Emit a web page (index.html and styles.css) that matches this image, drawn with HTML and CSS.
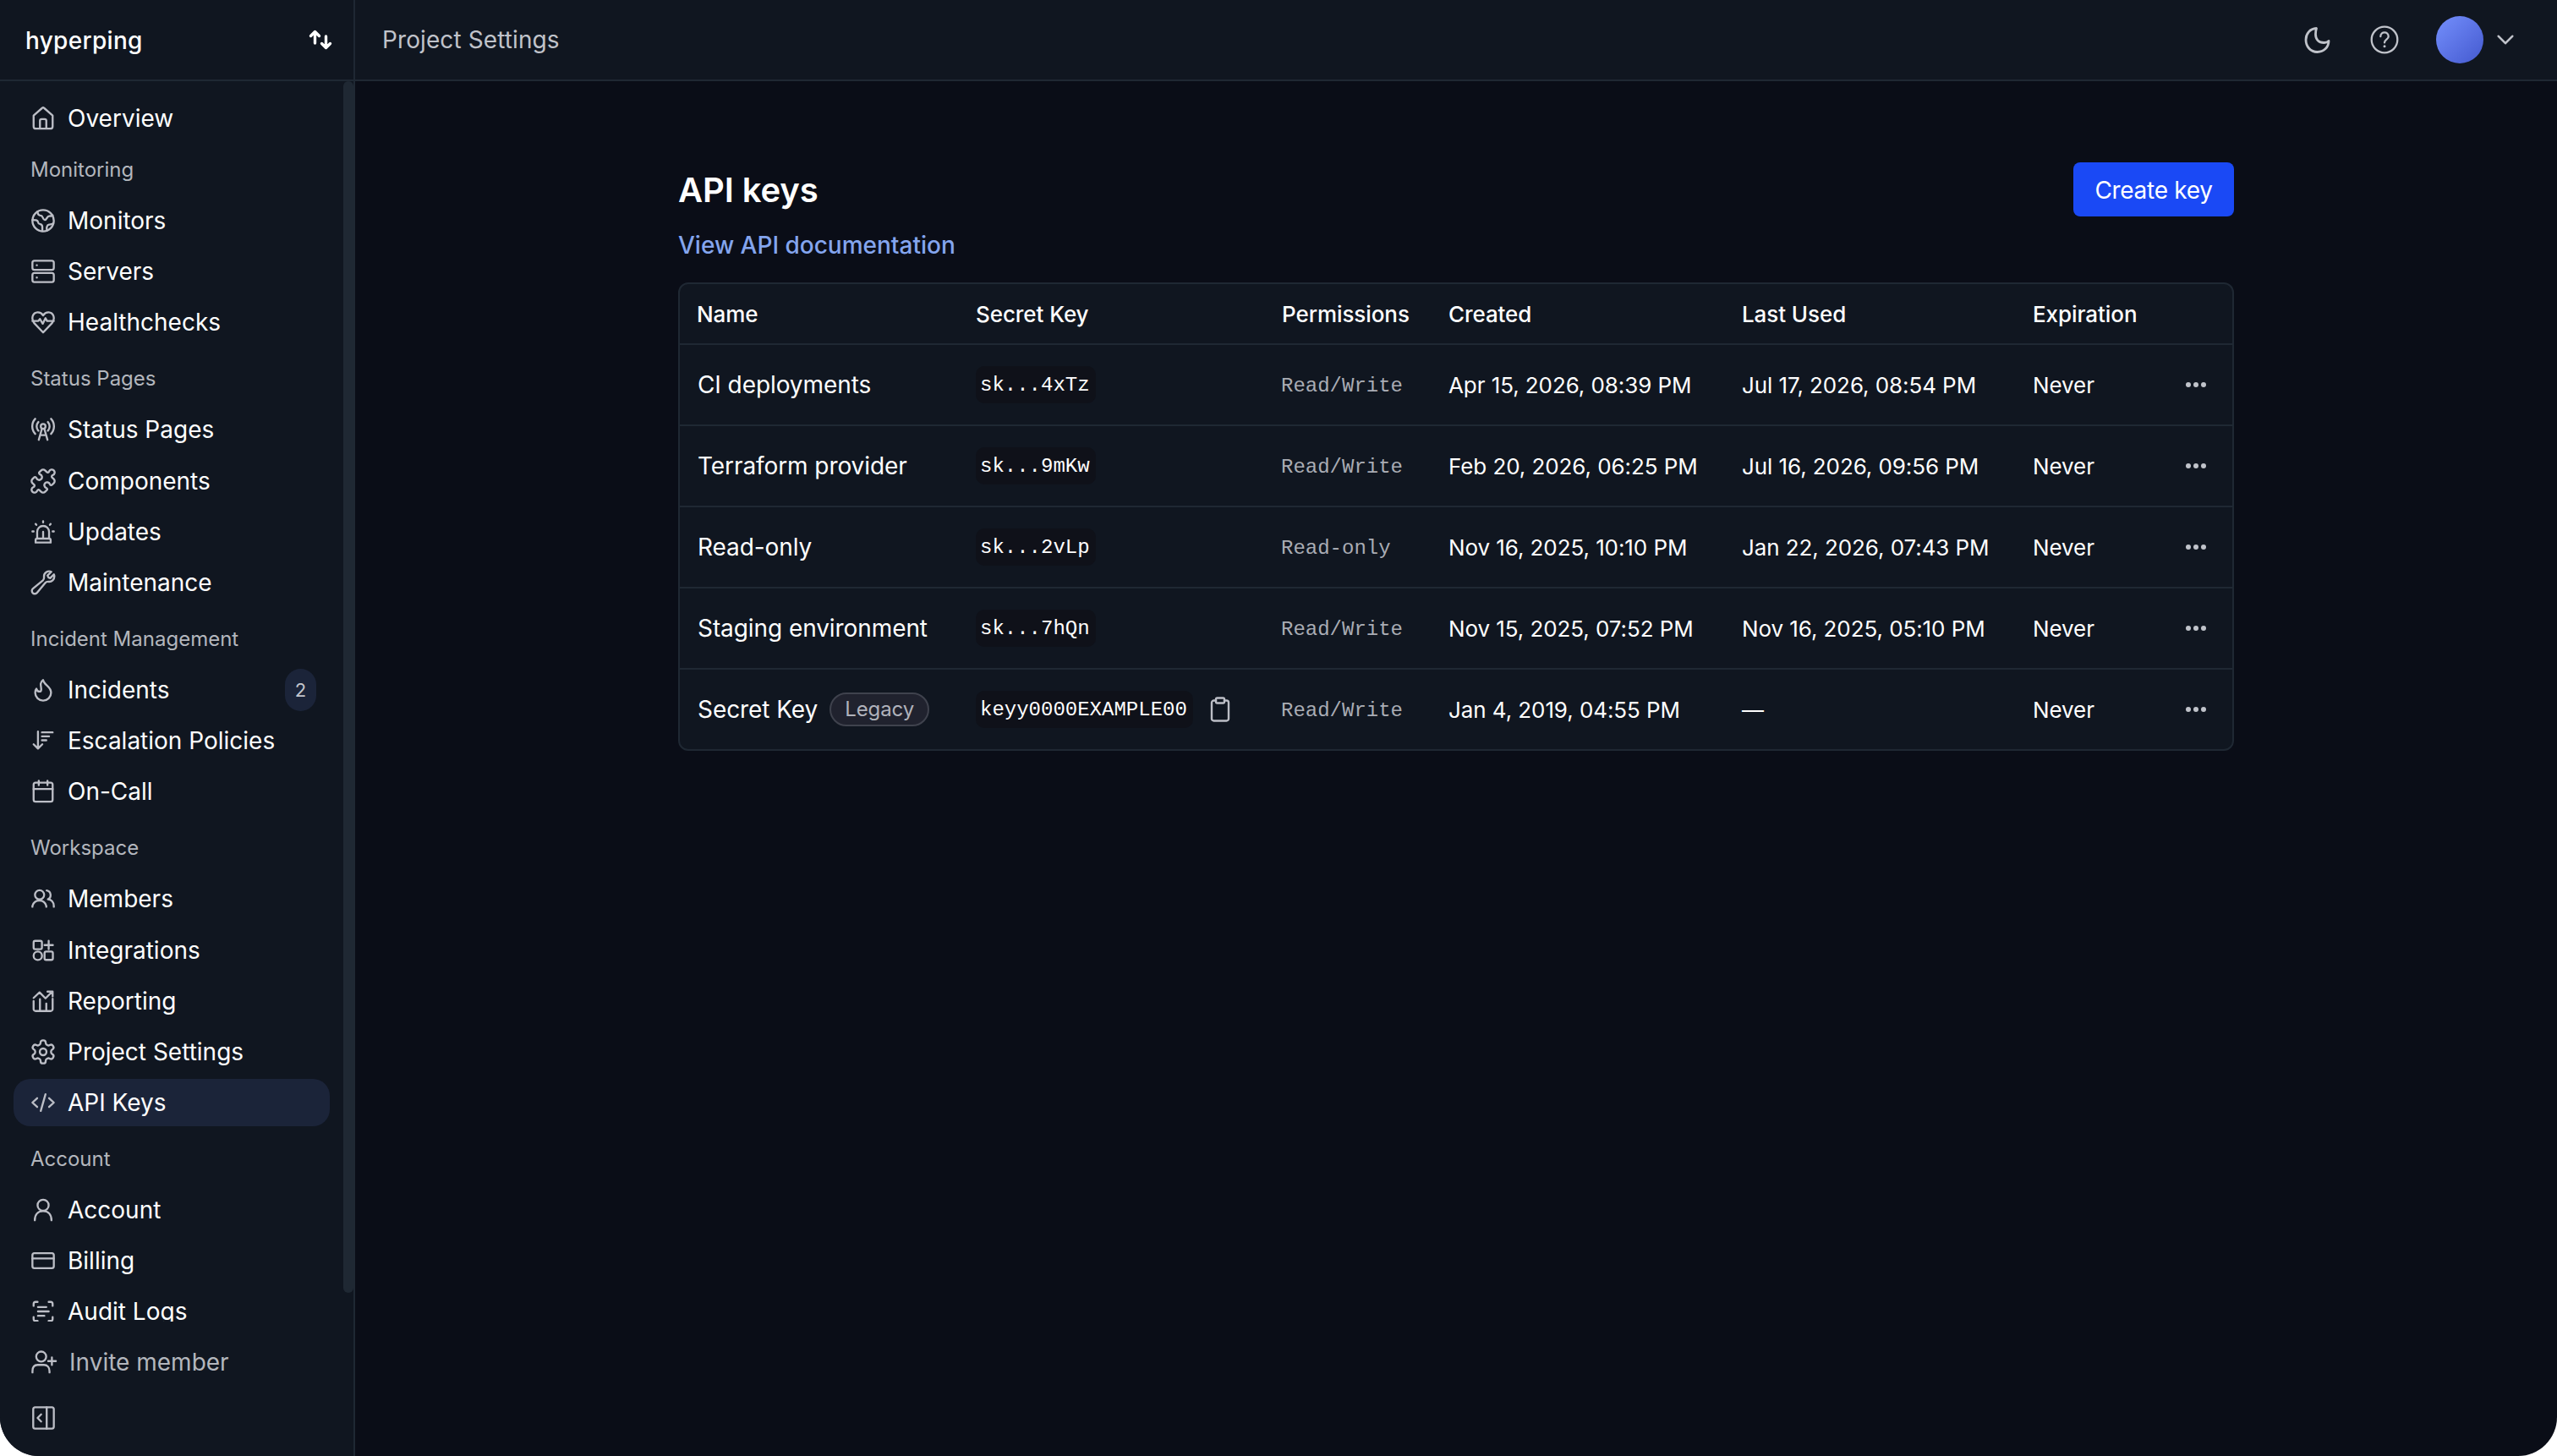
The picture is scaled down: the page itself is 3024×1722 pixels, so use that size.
FILE: index.html
```html
<!DOCTYPE html>
<html lang="en">
<head>
<meta charset="utf-8">
<title>API keys</title>
<link rel="stylesheet" href="styles.css">
</head>
<body>
<div class="app">
  <aside class="sidebar">
    <div class="brand">
      <span class="brand-name">hyperping</span>
      <svg class="swap" viewBox="0 0 28 24"><path d="M7.500 16V3M2.500 7.500 7.500 2.500 12.500 7.500M20.500 8V21M15.500 16.500 20.500 21.500 25.500 16.500"/></svg>
    </div>
    <nav class="nav">
      <div class="nav-list">
        <a class="item"><svg class="icon" viewBox="0 0 32 32"><path d="M4 12.500 14.500 3.200a2.200 2.200 0 0 1 3 0L28 12.500V26a3 3 0 0 1-3 3H7a3 3 0 0 1-3-3ZM12 29V19a2 2 0 0 1 2-2h4a2 2 0 0 1 2 2v10"/></svg>Overview</a>
        <h2 class="label label-first">Monitoring</h2>
        <a class="item"><svg class="icon" viewBox="0 0 32 32"><circle cx="16" cy="16" r="13.500"/><path d="M9 4.500c0 4 1.500 5 4.500 5.300 2.500.2 2 5.200 4.500 5.200 3 0 2.500-4.500 5.500-4.800 2-.2 3 .3 4.500-.8M2.500 15c4 0 6.500 0 7 2.500.4 2 .5 2.500 3 3s2.500 1.500 2.500 3.500v5M21 28.500c-1-3-.5-7 2.500-7.500 2-.3 4-.5 5-1.500"/></svg>Monitors</a>
        <a class="item"><svg class="icon" viewBox="0 0 32 32"><rect x="2.500" y="2.500" width="27" height="11.500" rx="2.500"/><rect x="2.500" y="18" width="27" height="11.500" rx="2.500"/><path d="M8 8.200h.1M8 23.700h.1"/></svg>Servers</a>
        <a class="item"><svg class="icon" viewBox="0 0 32 32"><path d="M2.500 14.500h7.500l2-2.500 3.500 6 3.500-7 2 3.500h8.500M5 17.500 16 29l11-11.500c2.500-3 3-6.500 2-9.500C26.800 2.500 19.500 2 16 7.500 12.500 2 5.200 2.500 3 8c-1 3-.5 6.500 2 9.500"/></svg>Healthchecks</a>

        <h2 class="label">Status Pages</h2>
        <a class="item gap-more"><svg class="icon" viewBox="0 0 32 32"><circle cx="16" cy="12" r="3"/><path d="M14.500 15 10.500 29M17.500 15 21.500 29M12.500 23h7M10 17.500a8 8 0 0 1 0-11M22 17.500a8 8 0 0 0 0-11M6 21.500a14 14 0 0 1 0-19M26 21.500a14 14 0 0 0 0-19"/></svg>Status Pages</a>
        <a class="item"><svg class="icon" viewBox="1 1 22 22"><path class="s15" d="M19.439 7.850c-.049.322.059.648.289.878l1.568 1.568c.47.47.706 1.087.706 1.704s-.235 1.233-.706 1.704l-1.611 1.611a.980.980 0 0 1-.837.276c-.470-.070-.802-.480-.968-.925a2.501 2.501 0 1 0-3.214 3.214c.446.166.855.497.925.968a.979.979 0 0 1-.276.837l-1.610 1.610a2.404 2.404 0 0 1-1.705.707 2.402 2.402 0 0 1-1.704-.706l-1.568-1.568a1.026 1.026 0 0 0-.877-.290c-.493.074-.840.504-1.020.968a2.500 2.500 0 1 1-3.237-3.237c.464-.180.894-.527.967-1.020a1.026 1.026 0 0 0-.289-.877l-1.568-1.568A2.402 2.402 0 0 1 1.998 12c0-.617.236-1.234.706-1.704L4.230 8.770c.240-.240.581-.353.917-.303.515.077.877.528 1.073 1.010a2.500 2.500 0 1 0 3.259-3.259c-.482-.196-.933-.558-1.010-1.073-.050-.336.062-.676.303-.917l1.525-1.525A2.402 2.402 0 0 1 12 1.998c.617 0 1.234.236 1.704.706l1.568 1.568c.230.230.556.338.877.290.493-.074.840-.504 1.020-.968a2.500 2.500 0 1 1 3.237 3.237c-.464.180-.894.527-.967 1.020Z"/></svg>Components</a>
        <a class="item"><svg class="icon" viewBox="0 0 32 32"><path d="M6.500 29.500v-3a2 2 0 0 1 2-2h15a2 2 0 0 1 2 2v3ZM8.500 24.500V16a7.500 7.500 0 0 1 15 0v8.500M16 24v-8M16 2.500v1.500M6.500 6l1 1.200M25.500 6l-1 1.200M2.500 15.500h1.500M28 15.500h1.500"/></svg>Updates</a>
        <a class="item"><svg class="icon" viewBox="1 1 22 22"><path class="s15" d="M21.750 6.750a4.500 4.500 0 0 1-4.884 4.484c-1.076-.091-2.264.071-2.950.904l-7.152 8.684a2.548 2.548 0 1 1-3.586-3.586l8.684-7.152c.833-.686.995-1.874.904-2.950a4.500 4.500 0 0 1 6.336-4.486l-3.276 3.276a3.004 3.004 0 0 0 2.250 2.250l3.276-3.276c.256.565.398 1.192.398 1.852Z"/></svg>Maintenance</a>

        <h2 class="label">Incident Management</h2>
        <a class="item"><svg class="icon" viewBox="0 0 32 32"><path d="M16 3.500c1 6.500 10 8 10 16a10 10 0 0 1-20 0c0-2.500.5-4 1.500-5 .5 2 2 3.500 4 3.500 4 0 1-7 1.500-10 .3-2 1.500-3.500 3-4.500Z"/></svg>Incidents<span class="count">2</span></a>
        <a class="item"><svg class="icon" viewBox="0 0 32 32"><path d="M9.500 4.500V25.500M4 20.500l5.500 5.500 5.500-5.500M14.500 5.500H28M14.500 10.500h9M14.500 15.500h5.500"/></svg>Escalation Policies</a>
        <a class="item"><svg class="icon" viewBox="0 0 32 32"><rect x="4" y="5" width="24" height="24" rx="2.500"/><path d="M4 13h24M10.500 2.500V8M21.500 2.500V8"/></svg>On-Call</a>

        <h2 class="label">Workspace</h2>
        <a class="item gap-more"><svg class="icon" viewBox="0 0 32 32"><circle cx="11.500" cy="11" r="5.800"/><path d="M2.500 26v-1a9 9 0 0 1 17.500 0v1M20.500 5.500a5.800 5.800 0 0 1 1.500 11c4 .3 7.500 3.500 7.500 8.500v1"/></svg>Members</a>
        <a class="item"><svg class="icon" viewBox="0 0 32 32"><rect x="4" y="4" width="10.500" height="10.500" rx="2"/><circle cx="9.300" cy="22.800" r="5.300"/><rect x="17.800" y="17.500" width="10.500" height="10.500" rx="2"/><path d="M23 4v10.500M17.800 9.300h10.500"/></svg>Integrations</a>
        <a class="item"><svg class="icon" viewBox="0 0 32 32"><path d="M4 16v10a2.500 2.500 0 0 0 2.500 2.500h19A2.500 2.500 0 0 0 28 26V13M4 12l7.500-7 7.500 7.500 8.500-8.500M21.500 4H28v6M12 13.500v15M20 19v9.500"/></svg>Reporting</a>
        <a class="item"><svg class="icon" viewBox="1 1 22 22"><path class="s15" d="M12.220 2h-.440a2 2 0 0 0-2 2v.180a2 2 0 0 1-1 1.730l-.430.250a2 2 0 0 1-2 0l-.150-.080a2 2 0 0 0-2.730.730l-.220.380a2 2 0 0 0 .730 2.730l.150.100a2 2 0 0 1 1 1.720v.510a2 2 0 0 1-1 1.740l-.150.090a2 2 0 0 0-.730 2.730l.220.380a2 2 0 0 0 2.730.730l.150-.080a2 2 0 0 1 2 0l.430.250a2 2 0 0 1 1 1.730V20a2 2 0 0 0 2 2h.440a2 2 0 0 0 2-2v-.180a2 2 0 0 1 1-1.730l.430-.250a2 2 0 0 1 2 0l.150.080a2 2 0 0 0 2.730-.730l.220-.390a2 2 0 0 0-.730-2.730l-.150-.080a2 2 0 0 1-1-1.740v-.500a2 2 0 0 1 1-1.740l.150-.090a2 2 0 0 0 .730-2.730l-.220-.380a2 2 0 0 0-2.730-.730l-.150.080a2 2 0 0 1-2 0l-.430-.250a2 2 0 0 1-1-1.730V4a2 2 0 0 0-2-2z"/><circle class="s15" cx="12" cy="12" r="2.900"/></svg>Project Settings</a>
        <a class="item active"><svg class="icon" viewBox="0 0 32 32"><path d="M8.500 10.500 2.500 16l6 5.500M23.500 10.500l6 5.500-6 5.500M19 5.500 13 26.500"/></svg>API Keys</a>

        <h2 class="label">Account</h2>
        <a class="item"><svg class="icon" viewBox="0 0 32 32"><circle cx="16" cy="10" r="7"/><path d="M5.500 29c0-7 4-11.500 10.500-11.500S26.500 22 26.500 29"/></svg>Account</a>
        <a class="item"><svg class="icon" viewBox="0 0 32 32"><rect x="2.500" y="6.500" width="27" height="19" rx="2.500"/><path d="M2.500 13.200h27"/></svg>Billing</a>
        <a class="item"><svg class="icon" viewBox="0 0 32 32"><path d="M4 9V6.500A2.500 2.500 0 0 1 6.500 4H9M23 4h2.500A2.500 2.500 0 0 1 28 6.500V9M28 23v2.500a2.500 2.500 0 0 1-2.500 2.500H23M9 28H6.500A2.500 2.500 0 0 1 4 25.500V23M9.500 10.500h10.500M9.500 16h13.500M9.500 21.500h8"/></svg>Audit Logs</a>
      </div>
      <div class="scrollbar"></div>
    </nav>
    <a class="item invite"><svg class="icon icon-wide" viewBox="0 0 34 32"><circle cx="13.500" cy="9" r="6.300"/><path d="M2.500 29v-1.500c0-5 2.500-8 6.500-8h8c4 0 7 3 7 8V29M27 10v9.500M22.300 14.700H32"/></svg>Invite member</a>
    <div class="collapse"><svg class="icon" viewBox="0 0 32 32"><rect x="3.500" y="2.500" width="26" height="27" rx="2.500"/><path d="M20.500 2.500v27M13.500 11.500 9 16l4.500 4.500"/></svg></div>
  </aside>

  <div class="content">
    <header class="topbar">
      <span class="crumb">Project Settings</span>
      <div class="tools">
        <svg class="moon" viewBox="0 0 32 32"><path d="M14.500 2.500C6.500 3 2 9 2 16c0 8 5.500 14.500 13.500 14.500 7.500 0 13.500-5.500 13.500-13-1.500 1.500-3.500 2-5.500 2-6.500 0-10-4-10-10 0-2.500.3-5 1-7Z"/></svg>
        <svg class="help" viewBox="0 0 34 34"><circle cx="17" cy="17" r="15.300"/><path d="M12.300 13.200c0-6.400 9.400-6.400 9.400 0 0 3.300-4.700 3.600-4.700 7.200"/><circle class="dot" cx="17" cy="24.800" r="1.500"/></svg>
        <span class="avatar"></span>
        <svg class="chevron" viewBox="0 0 20 12"><path d="M1.800 1.800 10 10.200 18.200 1.800"/></svg>
      </div>
    </header>

    <main class="page">
      <div class="page-head">
        <div>
          <h1 class="title">API keys</h1>
          <a class="doc-link">View API documentation</a>
        </div>
        <button class="create">Create key</button>
      </div>

      <div class="table">
        <div class="row head"><span>Name</span><span>Secret Key</span><span class="perm-head">Permissions</span><span>Created</span><span>Last Used</span><span>Expiration</span><span></span></div>
        <div class="row"><span class="name">CI deployments</span><span class="key-cell"><code class="key">sk...4xTz</code></span><span class="perm">Read/Write</span><span>Apr 15, 2026, 08:39 PM</span><span>Jul 17, 2026, 08:54 PM</span><span>Never</span><span class="more"><i></i><i></i><i></i></span></div>
        <div class="row"><span class="name">Terraform provider</span><span class="key-cell"><code class="key">sk...9mKw</code></span><span class="perm">Read/Write</span><span>Feb 20, 2026, 06:25 PM</span><span>Jul 16, 2026, 09:56 PM</span><span>Never</span><span class="more"><i></i><i></i><i></i></span></div>
        <div class="row"><span class="name">Read-only</span><span class="key-cell"><code class="key">sk...2vLp</code></span><span class="perm">Read-only</span><span>Nov 16, 2025, 10:10 PM</span><span>Jan 22, 2026, 07:43 PM</span><span>Never</span><span class="more"><i></i><i></i><i></i></span></div>
        <div class="row"><span class="name">Staging environment</span><span class="key-cell"><code class="key">sk...7hQn</code></span><span class="perm">Read/Write</span><span>Nov 15, 2025, 07:52 PM</span><span>Nov 16, 2025, 05:10 PM</span><span>Never</span><span class="more"><i></i><i></i><i></i></span></div>
        <div class="row"><span class="name">Secret Key<em class="tag">Legacy</em></span><span class="key-cell"><code class="key">keyy0000EXAMPLE00</code><svg class="clip" viewBox="0 0 24 30"><path d="M7 4.500H4.500A2.500 2.500 0 0 0 2 7v19a2.500 2.500 0 0 0 2.500 2.500h15A2.500 2.500 0 0 0 22 26V7a2.500 2.500 0 0 0-2.500-2.500H17"/><rect x="7" y="1.500" width="10" height="6" rx="1.500"/></svg></span><span class="perm">Read/Write</span><span>Jan 4, 2019, 04:55 PM</span><span>—</span><span>Never</span><span class="more"><i></i><i></i><i></i></span></div>
      </div>
    </main>
  </div>
</div>
</body>
</html>
```
FILE: styles.css
```css
* { box-sizing: border-box; }

body {
  margin: 0;
  background: #fff;
  font-family: Inter, "Liberation Sans", sans-serif;
  color: #fff;
}

svg {
  display: block;
  fill: none;
  stroke: currentColor;
  stroke-linecap: round;
  stroke-linejoin: round;
}

.app {
  display: flex;
  height: 1722px;
  overflow: hidden;
  background: #0a0d17;
  border-radius: 0 0 46px 46px;
}

/* Sidebar */
.sidebar {
  display: flex;
  flex-direction: column;
  width: 420px;
  flex: none;
  background: #101620;
  border-right: 2px solid #1f2833;
}

.brand {
  display: flex;
  align-items: center;
  justify-content: space-between;
  height: 96px;
  padding: 0 25px 0 30px;
  border-bottom: 2px solid #1f2833;
}

.brand-name {
  padding-top: 2px;
  font-size: 28px;
  font-weight: 500;
  letter-spacing: 0.3px;
}

.swap {
  width: 28px;
  height: 24px;
  stroke-width: 3.4;
}

.nav {
  display: flex;
  justify-content: space-between;
  height: 1467px;
  flex: none;
  overflow: hidden;
}

.nav-list {
  display: flex;
  flex-direction: column;
  width: 390px;
  padding: 16px 0 0 16px;
}

.scrollbar {
  width: 12px;
  height: 1433px;
  border-radius: 6px;
  background: #1f2833;
}

.item {
  display: flex;
  align-items: center;
  flex: none;
  height: 56px;
  margin-bottom: 4px;
  padding: 0 16px 0 20px;
  gap: 14px;
  border-radius: 20px;
  font-size: 28px;
  line-height: 40px;
}

.gap-more { margin-bottom: 5px; }
.active { background: #1b2439; }

.icon {
  width: 30px;
  height: 30px;
  flex: none;
  color: #bcbec6;
  stroke-width: 2.5;
}

.icon-wide { width: 32px; }
.s15 { stroke-width: 1.75; }

.label {
  flex: none;
  margin: 18px 0 0 20px;
  height: 49px;
  font-size: 24px;
  font-weight: 400;
  line-height: 34px;
  color: #b3b6bd;
}

.label-first { margin-top: 12px; }

.count {
  display: flex;
  align-items: center;
  justify-content: center;
  width: 37px;
  height: 50px;
  margin-left: auto;
  border-radius: 19px;
  background: #1b2439;
  font-size: 22px;
  color: #c3c6cd;
}

.invite {
  margin: 20px 0 0 16px;
  color: #b3b6bd;
}

.collapse { padding: 23px 0 0 36px; }

/* Top bar */
.content {
  flex: 1;
  min-width: 0;
}

.topbar {
  display: flex;
  align-items: center;
  justify-content: space-between;
  height: 96px;
  padding: 0 51px 0 32px;
  background: #101620;
  border-bottom: 2px solid #1f2833;
}

.crumb {
  font-size: 28px;
  letter-spacing: 0.1px;
  color: #c0c3ca;
}

.tools {
  display: flex;
  align-items: center;
  color: #c0c3ca;
}

.moon {
  width: 32px;
  height: 32px;
  margin-right: 46px;
  stroke-width: 2.8;
}

.help {
  width: 34px;
  height: 34px;
  margin-right: 44px;
  stroke-width: 2.3;
}

.dot { fill: currentColor; stroke: none; }

.avatar {
  width: 56px;
  height: 56px;
  margin-right: 16px;
  border-radius: 50%;
  background: linear-gradient(135deg, #748ffc, #4459cf);
}

.chevron {
  width: 20px;
  height: 12px;
  stroke-width: 2.6;
}

/* Page */
.page {
  width: 1840px;
  margin: 0 auto;
  padding-top: 96px;
}

.page-head {
  display: flex;
  align-items: flex-start;
  justify-content: space-between;
  height: 142px;
}

.title {
  margin: 0;
  padding-top: 1px;
  font-size: 40px;
  font-weight: 600;
  line-height: 64px;
  letter-spacing: -0.1px;
}

.doc-link {
  display: block;
  font-size: 28px;
  font-weight: 500;
  line-height: 66px;
  color: #84a5ee;
}

.create {
  width: 190px;
  height: 64px;
  padding: 1px 0 0;
  border: 0;
  border-radius: 8px;
  background: #1a49f5;
  color: #fff;
  font: 400 28px Inter, "Liberation Sans", sans-serif;
  letter-spacing: -0.3px;
}

.table {
  border: 2px solid #1f2833;
  border-radius: 12px;
  background: #101620;
}

.row {
  display: grid;
  grid-template-columns: 330px 361px 198px 347px 344px 181px 1fr;
  align-items: center;
  height: 96px;
  padding-left: 20px;
  border-bottom: 2px solid #1f2833;
  font-size: 26px;
  letter-spacing: -0.08px;
  white-space: nowrap;
}

.row:last-child { height: 94px; border-bottom: 0; }

.head {
  height: 72px;
  font-weight: 500;
}

.name {
  display: flex;
  align-items: center;
  padding-left: 1px;
  font-size: 28px;
}

.tag {
  margin-left: 14px;
  padding: 0 16px;
  border: 2px solid #3f424d;
  border-radius: 20px;
  background: #20222e;
  font-size: 24px;
  font-style: normal;
  line-height: 36px;
  color: #b0b2bb;
}

.key-cell {
  display: flex;
  align-items: center;
}

.key {
  height: 44px;
  padding: 2px 7px 0 5px;
  border-radius: 10px;
  background: #0f1119;
  font: 24px/42px "Liberation Mono", monospace;
  letter-spacing: 0;
}

.clip {
  width: 24px;
  height: 30px;
  margin-left: 20px;
  color: #bcbec6;
  stroke-width: 2.4;
}

.perm {
  padding-top: 3px;
  font: 24px "Liberation Mono", monospace;
  letter-spacing: 0;
  color: #a9acb4;
}

.perm-head { padding-left: 1px; }

.more {
  display: flex;
  gap: 3px;
}

.more i {
  width: 6px;
  height: 6px;
  border-radius: 50%;
  background: #c0c3ca;
}
```
